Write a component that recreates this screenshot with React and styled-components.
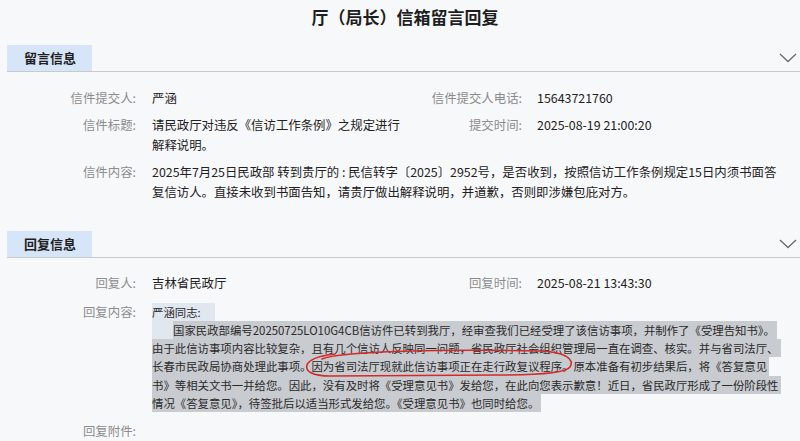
import React from "react";
import styled, { createGlobalStyle } from "styled-components";

const Global = createGlobalStyle`
  body {
    margin: 0;
    background: #f7f8fa;
    font-family: "Noto Sans CJK SC", "Noto Sans", sans-serif;
    color: #222;
  }
`;

const Page = styled.div`
  width: 800px;
  height: 441px;
  overflow: hidden;
`;

const Title = styled.h1`
  margin: 0;
  height: 34px;
  line-height: 34px;
  padding-left: 10px;
  text-align: center;
  font-size: 17px;
  font-weight: 700;
  color: #1e1e1e;
`;

const Section = styled.section`
  margin-top: ${(p) => p.$top}px;
`;

const SectionHeader = styled.div`
  display: flex;
  justify-content: space-between;
  align-items: center;
  margin-left: 7px;
  border-bottom: 1px solid #c9c9c9;
`;

const Tab = styled.div`
  height: 26px;
  line-height: 26px;
  padding: 0 16px 0 17px;
  background: #d7e5f8;
  font-size: 13px;
  font-weight: 700;
  color: #1f1f1f;
`;

const Chevron = styled.svg`
  margin-right: 3px;
`;

const Body = styled.div`
  display: flex;
  flex-direction: column;
  gap: ${(p) => p.$gap}px;
  padding-top: ${(p) => p.$pad}px;
`;

const Pair = styled.div`
  display: grid;
  grid-template-columns: 400px 1fr;
`;

const Field = styled.div`
  display: grid;
  grid-template-columns: ${(p) => p.$label}px 1fr;
  column-gap: ${(p) => p.$gap || 16}px;
  font-size: 12.4px;
  line-height: 20px;
`;

const Label = styled.div`
  text-align: right;
  color: #8c8c8c;
  white-space: nowrap;
`;

const Value = styled.div`
  color: #222;
  white-space: nowrap;
`;

const Reply = styled.div`
  position: relative;
  font-size: 11.4px;
  line-height: 18.3px;
  color: #2a2a2a;
  padding-top: 0.5px;
`;

const Line = styled.div`
  width: fit-content;
  white-space: nowrap;
  background: ${(p) => (p.$light ? "#e1e7ef" : "#c8cbcf")};
  padding-right: ${(p) => (p.$light ? 14 : 2)}px;
`;

const Indent = styled.span`
  display: inline-block;
  width: 21px;
  height: 18.3px;
  vertical-align: top;
  background: #e1e7ef;
`;

const Circle = styled.svg`
  position: absolute;
  left: 0;
  top: 0;
  pointer-events: none;
`;

const Down = () => (
  <Chevron width="18" height="10" viewBox="0 0 18 10">
    <polyline points="1,1 9,8.5 17,1" fill="none" stroke="#6b6b6b" strokeWidth="1.3" />
  </Chevron>
);

const Header = ({ children }) => (
  <SectionHeader>
    <Tab>{children}</Tab>
    <Down />
  </SectionHeader>
);

const replyLines = [
  "由于此信访事项内容比较复杂，且有几个信访人反映同一问题，省民政厅社会组织管理局一直在调查、核实。并与省司法厅、",
  "长春市民政局协商处理此事项。因为省司法厅现就此信访事项正在走行政复议程序。原本准备有初步结果后，将《答复意见",
  "书》等相关文书一并给您。因此，没有及时将《受理意见书》发给您，在此向您表示歉意！近日，省民政厅形成了一份阶段性",
  "情况《答复意见》，待签批后以适当形式发给您。《受理意见书》也同时给您。",
];

export default function App() {
  return (
    <Page>
      <Global />
      <Title>厅（局长）信箱留言回复</Title>

      <Section $top={11}>
        <Header>留言信息</Header>
        <Body $gap={7} $pad={16}>
          <Pair>
            <Field $label={136}>
              <Label>信件提交人:</Label>
              <Value>严涵</Value>
            </Field>
            <Field $label={122} $gap={15}>
              <Label>信件提交人电话:</Label>
              <Value>15643721760</Value>
            </Field>
          </Pair>
          <Pair>
            <Field $label={136}>
              <Label>信件标题:</Label>
              <Value>
                请民政厅对违反《信访工作条例》之规定进行
                <br />
                解释说明。
              </Value>
            </Field>
            <Field $label={122} $gap={15}>
              <Label>提交时间:</Label>
              <Value>2025-08-19 21:00:20</Value>
            </Field>
          </Pair>
          <Field $label={136}>
            <Label>信件内容:</Label>
            <Value>
              2025年7月25日民政部 转到贵厅的 : 民信转字〔2025〕2952号，是否收到，按照信访工作条例规定15日内须书面答
              <br />
              复信访人。直接未收到书面告知，请贵厅做出解释说明，并道歉，否则即涉嫌包庇对方。
            </Value>
          </Field>
        </Body>
      </Section>

      <Section $top={29}>
        <Header>回复信息</Header>
        <Body $gap={9} $pad={15}>
          <Pair>
            <Field $label={136}>
              <Label>回复人:</Label>
              <Value>吉林省民政厅</Value>
            </Field>
            <Field $label={122} $gap={15}>
              <Label>回复时间:</Label>
              <Value>2025-08-21 13:43:30</Value>
            </Field>
          </Pair>
          <Field $label={136}>
            <Label>回复内容:</Label>
            <Reply>
              <Line $light>严涵同志:</Line>
              <Line>
                <Indent />
                国家民政部编号20250725LO10G4CB信访件已转到我厅，经审查我们已经受理了该信访事项，并制作了《受理告知书》。
              </Line>
              {replyLines.map((t) => (
                <Line key={t}>{t}</Line>
              ))}
              <Circle width="640" height="120" viewBox="0 0 640 120">
                <path
                  d="M170 57 C188 49, 298 47, 388 49 C413 50, 423 57, 418 65 C414 71, 388 73, 348 73 L178 74 C160 74, 153 69, 155 63 C157 57, 166 54, 183 52"
                  fill="none"
                  stroke="#d42a2a"
                  strokeWidth="1.6"
                  strokeLinecap="round"
                />
              </Circle>
            </Reply>
          </Field>
          <Field $label={136}>
            <Label>回复附件:</Label>
            <Value />
          </Field>
        </Body>
      </Section>
    </Page>
  );
}
